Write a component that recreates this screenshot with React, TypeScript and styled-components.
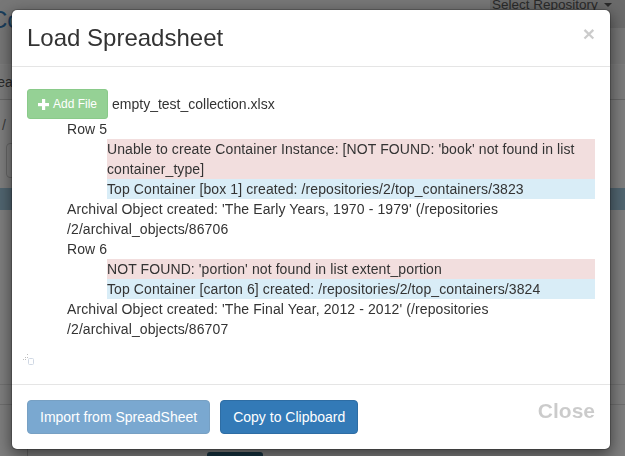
import React from "react";
import styled, { createGlobalStyle, css } from "styled-components";

const GlobalStyle = createGlobalStyle`
  * { box-sizing: border-box; }
  html, body { margin: 0; padding: 0; width: 625px; height: 456px; overflow: hidden; }
  body {
    font-family: "Liberation Sans", Arial, Helvetica, sans-serif;
    font-size: 14px;
    line-height: 20px;
    color: #333;
    background: #fff;
  }
`;

/* ---------- background page (dimmed by the backdrop) ---------- */

const Page = styled.div`
  display: flex;
  flex-direction: column;
  width: 625px;
  height: 456px;
  overflow: hidden;
  background: #fdfdfd;
`;

const Masthead = styled.header`
  height: 65px;
  display: flex;
  justify-content: space-between;
  align-items: flex-start;
  background: #eeeeee;
  border-bottom: 1px solid #fafafa;
  overflow: hidden;
`;

const SiteTitle = styled.div`
  margin: 6px 0 0 -10px;
  font-size: 24px;
  line-height: 28px;
  color: #337ab7;
`;

const RepoMenu = styled.div`
  width: 135px;
  height: 28px;
  background: #d6d6d6;
  color: #555;
  font-size: 13.5px;
  line-height: 16px;
  padding: 0 0 0 2px;
  display: flex;
  align-items: flex-start;
  gap: 6px;
  & > span { margin-top: -3px; }
`;

const Caret = styled.i`
  display: inline-block;
  margin-top: 3px;
  width: 0;
  height: 0;
  border-left: 4px solid transparent;
  border-right: 4px solid transparent;
  border-top: 4px solid #555;
`;

const Toolbar = styled.div`
  height: 35px;
  display: flex;
  align-items: center;
  padding-left: 0;
  border-bottom: 1px solid #cfcfcf;
  background: #f6f6f6;
  color: #555;
  & > span { margin-left: -12px; }
`;

const Crumbs = styled.div`
  height: 88px;
  display: flex;
  flex-direction: column;
  gap: 8px;
  padding: 15px 0 0 2px;
  color: #777;
`;

const FakeInput = styled.div`
  width: 60px;
  height: 35px;
  margin-left: 4px;
  border: 1px solid #ccc;
  border-radius: 4px;
  background: #fff;
`;

const TealBar = styled.div`
  height: 22px;
  background: #a3cbe0;
`;

const Filler = styled.div`
  flex: 1;
  border-bottom: 1px solid #e2e2e2;
`;

const TableArea = styled.div`
  height: 71px;
  display: grid;
  grid-template-columns: 28px 1fr;
  grid-template-rows: 20px 1fr;
  & > div:nth-child(1), & > div:nth-child(2) { border-bottom: 1px solid #ddd; }
  & > div:nth-child(3) { border-right: 1px solid #ccc; }
`;

const TableCell = styled.div`
  display: flex;
  align-items: flex-end;
`;

const DarkPill = styled.div`
  margin-left: 179px;
  width: 56px;
  height: 4px;
  border-radius: 3px 3px 0 0;
  background: #2f6680;
`;

/* ---------- modal ---------- */

const Backdrop = styled.div`
  position: fixed;
  inset: 0;
  background: rgba(0, 0, 0, 0.5);
`;

const Dialog = styled.div`
  position: absolute;
  top: 9px;
  left: 11px;
  width: 600px;
  background: #fff;
  background-clip: padding-box;
  border: 1px solid rgba(0, 0, 0, 0.2);
  border-radius: 6px;
  box-shadow: 0 5px 15px rgba(0, 0, 0, 0.5);
`;

const Header = styled.div`
  display: flex;
  justify-content: space-between;
  align-items: flex-start;
  padding: 15px;
  border-bottom: 1px solid #e5e5e5;
`;

const Title = styled.h3`
  margin: 0;
  font-size: 24px;
  line-height: 1.1;
  font-weight: 500;
  color: #333;
`;

const closeLook = css`
  padding: 0;
  border: 0;
  background: none;
  font-family: inherit;
  font-size: 21px;
  font-weight: bold;
  line-height: 1;
  color: #000;
  opacity: 0.2;
  text-shadow: 0 1px 0 #fff;
  cursor: pointer;
`;

const CloseX = styled.button`
  ${closeLook};
  margin-top: -2px;
`;

const Body = styled.div`
  padding: 22px 15px 15px;
`;

const FileRow = styled.div`
  display: flex;
  align-items: center;
  gap: 4px;
  height: 30px;
`;

const AddFileButton = styled.button`
  display: inline-flex;
  align-items: center;
  gap: 4px;
  padding: 5px 10px;
  font-family: inherit;
  font-size: 12px;
  line-height: 18px;
  color: #fff;
  background: #5cb85c;
  border: 1px solid #4cae4c;
  border-radius: 3px;
  opacity: 0.65;
`;

const FileName = styled.span`
  color: #333;
`;

const LogList = styled.ul`
  list-style: none;
  margin: 0;
  padding: 0;
`;

type Tone = "danger" | "info" | undefined;

const LogItem = styled.li<{ $level: number; $tone?: Tone }>`
  margin-left: ${(p) => p.$level * 40}px;
  line-height: 20px;
  letter-spacing: 0.1px;
  color: #333;
  background: ${(p) =>
    p.$tone === "danger" ? "#f2dede" : p.$tone === "info" ? "#d9edf7" : "transparent"};
`;

const HandleRow = styled.div`
  height: 20px;
  margin: 10px 0 0 -5px;
  display: flex;
  align-items: center;
`;

const Footer = styled.div`
  display: flex;
  align-items: flex-start;
  gap: 10px;
  padding: 15px;
  border-top: 1px solid #e5e5e5;
`;

const PrimaryButton = styled.button<{ $disabled?: boolean }>`
  padding: 6px 12px;
  font-family: inherit;
  font-size: 14px;
  line-height: 20px;
  color: #fff;
  background: #337ab7;
  border: 1px solid #2e6da4;
  border-radius: 4px;
  opacity: ${(p) => (p.$disabled ? 0.65 : 1)};
`;

const CloseLink = styled.button`
  ${closeLook};
  margin-left: auto;
`;

const PlusIcon = () => (
  <svg width="11" height="11" viewBox="0 0 11 11" aria-hidden>
    <rect x="4" y="0" width="3.2" height="11" fill="#fff" />
    <rect x="0" y="4" width="11" height="3.2" fill="#fff" />
  </svg>
);

const HandleIcon = () => (
  <svg width="12" height="11" viewBox="0 0 12 11" aria-hidden>
    <rect x="5" y="0" width="1" height="1" fill="#bfbfbf" />
    <rect x="3" y="3" width="1" height="1" fill="#bfbfbf" />
    <rect x="5" y="3" width="1" height="1" fill="#bfbfbf" />
    <rect x="1" y="5" width="1" height="1" fill="#bfbfbf" />
    <rect x="3" y="5" width="1" height="1" fill="#bfbfbf" />
    <rect x="6.5" y="4.5" width="5" height="6" rx="1" fill="none" stroke="#d0d8e4" />
  </svg>
);

type Entry = { level: number; tone?: Tone; lines: string[] };

const entries: Entry[] = [
  { level: 1, lines: ["Row 5"] },
  {
    level: 2,
    tone: "danger",
    lines: ["Unable to create Container Instance: [NOT FOUND: 'book' not found in list container_type]"],
  },
  { level: 2, tone: "info", lines: ["Top Container [box 1] created: /repositories/2/top_containers/3823"] },
  {
    level: 1,
    lines: ["Archival Object created: 'The Early Years, 1970 - 1979' (/repositories", "/2/archival_objects/86706"],
  },
  { level: 1, lines: ["Row 6"] },
  { level: 2, tone: "danger", lines: ["NOT FOUND: 'portion' not found in list extent_portion"] },
  { level: 2, tone: "info", lines: ["Top Container [carton 6] created: /repositories/2/top_containers/3824"] },
  {
    level: 1,
    lines: ["Archival Object created: 'The Final Year, 2012 - 2012' (/repositories", "/2/archival_objects/86707"],
  },
];

export default function App() {
  return (
    <>
      <GlobalStyle />
      <Page>
        <Masthead>
          <SiteTitle>Collections</SiteTitle>
          <RepoMenu>
            <span>Select Repository</span>
            <Caret />
          </RepoMenu>
        </Masthead>
        <Toolbar>
          <span>Search</span>
        </Toolbar>
        <Crumbs>
          <span>/</span>
          <FakeInput />
        </Crumbs>
        <TealBar />
        <Filler />
        <TableArea>
          <TableCell />
          <TableCell />
          <TableCell />
          <TableCell>
            <DarkPill />
          </TableCell>
        </TableArea>
      </Page>
      <Backdrop />
      <Dialog role="dialog">
        <Header>
          <Title>Load Spreadsheet</Title>
          <CloseX aria-label="Close">×</CloseX>
        </Header>
        <Body>
          <FileRow>
            <AddFileButton>
              <PlusIcon />
              Add File
            </AddFileButton>
            <FileName>empty_test_collection.xlsx</FileName>
          </FileRow>
          <LogList>
            {entries.map((e, i) => (
              <LogItem key={i} $level={e.level} $tone={e.tone}>
                {e.lines.map((l, j) => (
                  <React.Fragment key={j}>
                    {j > 0 && <br />}
                    {l}
                  </React.Fragment>
                ))}
              </LogItem>
            ))}
          </LogList>
          <HandleRow>
            <HandleIcon />
          </HandleRow>
        </Body>
        <Footer>
          <PrimaryButton $disabled>Import from SpreadSheet</PrimaryButton>
          <PrimaryButton>Copy to Clipboard</PrimaryButton>
          <CloseLink>Close</CloseLink>
        </Footer>
      </Dialog>
    </>
  );
}
